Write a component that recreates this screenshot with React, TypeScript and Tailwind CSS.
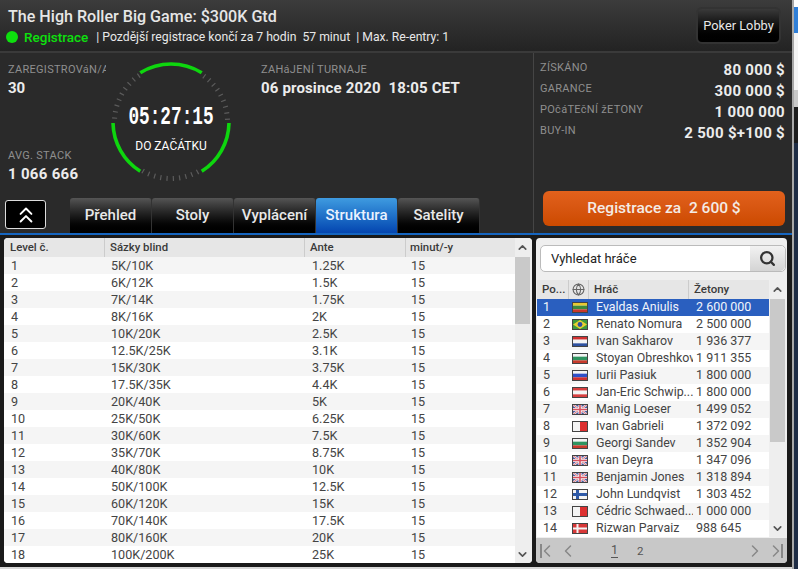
import { ChevronsUp, ChevronUp, ChevronDown, ChevronLeft, ChevronRight, Search, Globe } from "lucide-react";

const levels = [
  ["1", "5K/10K", "1.25K"],
  ["2", "6K/12K", "1.5K"],
  ["3", "7K/14K", "1.75K"],
  ["4", "8K/16K", "2K"],
  ["5", "10K/20K", "2.5K"],
  ["6", "12.5K/25K", "3.1K"],
  ["7", "15K/30K", "3.75K"],
  ["8", "17.5K/35K", "4.4K"],
  ["9", "20K/40K", "5K"],
  ["10", "25K/50K", "6.25K"],
  ["11", "30K/60K", "7.5K"],
  ["12", "35K/70K", "8.75K"],
  ["13", "40K/80K", "10K"],
  ["14", "50K/100K", "12.5K"],
  ["15", "60K/120K", "15K"],
  ["16", "70K/140K", "17.5K"],
  ["17", "80K/160K", "20K"],
  ["18", "100K/200K", "25K"],
];

const players = [
  ["Evaldas Aniulis", "2 600 000", "lt"],
  ["Renato Nomura", "2 500 000", "br"],
  ["Ivan Sakharov", "1 936 377", "nl"],
  ["Stoyan Obreshkov", "1 911 355", "bg"],
  ["Iurii Pasiuk", "1 800 000", "ru"],
  ["Jan-Eric Schwip...", "1 800 000", "at"],
  ["Manig Loeser", "1 499 052", "gb"],
  ["Ivan Gabrieli", "1 372 092", "mt"],
  ["Georgi Sandev", "1 352 904", "bg"],
  ["Ivan Deyra", "1 347 096", "gb"],
  ["Benjamin Jones", "1 318 894", "gb"],
  ["John Lundqvist", "1 303 452", "fi"],
  ["Cédric Schwaed...", "1 000 000", "mt"],
  ["Rizwan Parvaiz", "988 645", "dk"],
];

const tabs = ["Přehled", "Stoly", "Vyplácení", "Struktura", "Satelity"];

const stats = [
  ["ZÍSKÁNO", "80 000 $"],
  ["GARANCE", "300 000 $"],
  ["POčáTEčNÍ žETONY", "1 000 000"],
  ["BUY-IN", "2 500 $+100 $"],
];

function Flag({ code }: { code: string }) {
  const stripes: Record<string, string[]> = {
    lt: ["#e8c832", "#3c8a3c", "#c8372d"],
    nl: ["#d03030", "#f4f4f4", "#2f52a0"],
    bg: ["#f4f4f4", "#2f9460", "#c83a2c"],
    ru: ["#f4f4f4", "#3050c8", "#d03030"],
    at: ["#d84040", "#f4f4f4", "#d84040"],
  };
  return (
    <svg width="16" height="11" viewBox="0 0 16 11" className="block shrink-0">
      <rect width="16" height="11" fill="#f4f4f4" />
      {stripes[code]?.map((c, i) => <rect key={i} y={i * 3.67} width="16" height="3.67" fill={c} />)}
      {code === "br" && (
        <>
          <rect width="16" height="11" fill="#3d9a3d" />
          <polygon points="8,1 15,5.5 8,10 1,5.5" fill="#e8d030" />
          <circle cx="8" cy="5.5" r="2.4" fill="#2f4f9f" />
        </>
      )}
      {code === "gb" && (
        <>
          <rect width="16" height="11" fill="#4a5aa0" />
          <path d="M0 0L16 11M16 0L0 11" stroke="#f4f4f4" strokeWidth="2.2" />
          <path d="M0 0L16 11M16 0L0 11" stroke="#d85060" strokeWidth="0.8" />
          <path d="M8 0V11M0 5.5H16" stroke="#f4f4f4" strokeWidth="3.2" />
          <path d="M8 0V11M0 5.5H16" stroke="#d85060" strokeWidth="1.6" />
        </>
      )}
      {code === "mt" && <rect x="8" width="8" height="11" fill="#dc2f2f" />}
      {code === "fi" && <path d="M5.5 0V11M0 5.5H16" stroke="#2f5aa8" strokeWidth="3" />}
      {code === "dk" && (
        <>
          <rect width="16" height="11" fill="#d83838" />
          <path d="M5.5 0V11M0 5.5H16" stroke="#f4f4f4" strokeWidth="2" />
        </>
      )}
      <rect x="0.5" y="0.5" width="15" height="10" fill="none" stroke="#444" />
    </svg>
  );
}

function polar(deg: number, r: number) {
  const a = ((deg - 90) * Math.PI) / 180;
  return [60 + r * Math.cos(a), 60 + r * Math.sin(a)];
}

function arc(from: number, to: number) {
  const [x1, y1] = polar(from, 58);
  const [x2, y2] = polar(to, 58);
  return `M${x1} ${y1}A58 58 0 0 1 ${x2} ${y2}`;
}

function Countdown() {
  const ticks: number[] = [];
  for (let d = 36; d < 88; d += 6.4) ticks.push(d);
  for (let d = 152; d < 212; d += 6.4) ticks.push(d);
  for (let d = 274; d < 328; d += 6.4) ticks.push(d);
  return (
    <div className="relative h-[120px] w-[120px] shrink-0">
      <svg width="120" height="120" viewBox="0 0 120 120" className="block">
        {ticks.map((d) => {
          const [x1, y1] = polar(d, 54);
          const [x2, y2] = polar(d, 59);
          return <line key={d} x1={x1} y1={y1} x2={x2} y2={y2} stroke="#5c5c5c" strokeWidth="1.2" />;
        })}
        <g fill="none" stroke="#0ed60e" strokeWidth="3.6">
          <path d={arc(-32, 32)} />
          <path d={arc(91, 148)} />
          <path d={arc(212, 269)} />
        </g>
      </svg>
      <div className="absolute left-0 top-[43px] flex w-full justify-center">
        <span className="origin-center scale-x-[0.71] font-['Liberation_Mono',monospace] text-[25px] font-bold leading-[26px] text-white">
          05:27:15
        </span>
      </div>
      <div className="absolute left-0 top-[77px] w-full text-center text-[12px] leading-[14px] text-white">DO ZAČÁTKU</div>
    </div>
  );
}

export default function App() {
  return (
    <div className="flex h-[569px] w-[798px] overflow-hidden bg-[#d8d8d8] font-['Roboto',sans-serif]">
      <div className="flex h-[567px] w-[792px] shrink-0 flex-col bg-[#1a1a1a]">
        <header className="flex h-[53px] shrink-0 items-start justify-between border-b-2 border-[#3a3a3a] bg-gradient-to-b from-[#3c3c3c] to-[#232323] pl-2 pr-[11px] pt-2">
          <div>
            <h1 className="text-[16.1px] font-medium leading-[18px] text-[#e6e6e6]">The High Roller Big Game: $300K Gtd</h1>
            <div className="mt-[3px] flex h-4 items-center text-[12.2px] text-[#e8e8e8]">
              <span className="-ml-[2px] mr-[6px] h-3 w-3 rounded-full bg-[#0ee00e]" />
              <span className="mr-[8px] text-[13.5px] font-medium text-[#0ee00e]">Registrace</span>
              <span className="whitespace-pre">| Pozdější registrace končí za 7 hodin  57 minut  | Max. Re-entry: 1</span>
            </div>
          </div>
          <button className="-mt-[1px] h-[37px] w-[85px] rounded-md border-2 border-[#333] bg-gradient-to-b from-[#3a3a3a] to-black text-[12.8px] text-[#e8e8e8]">
            Poker Lobby
          </button>
        </header>

        <section className="flex h-[182px] shrink-0 border-b-2 border-[#1565c0] bg-[#2a2a2a]">
          <div className="flex w-[534px] shrink-0 flex-col border-r border-[#454545]">
            <div className="flex h-[146px] pl-2">
              <div className="flex w-[98px] shrink-0 flex-col justify-between pb-[12px] pt-[10px]">
                <div className="overflow-hidden whitespace-nowrap">
                  <div className="text-[11px] leading-[14px] tracking-[0.3px] text-[#8f8f8f]">ZAREGISTROVáN/A</div>
                  <div className="mt-[2px] text-[15px] font-bold leading-[18px] text-[#ececec]">30</div>
                </div>
                <div className="mb-[3px] whitespace-nowrap">
                  <div className="text-[11px] leading-[14px] tracking-[0.3px] text-[#8f8f8f]">AVG. STACK</div>
                  <div className="mt-[2px] text-[15px] font-bold leading-[18px] tracking-[0.3px] text-[#ececec]">1 066 666</div>
                </div>
              </div>
              <div className="ml-[5px] mt-[9px]">
                <Countdown />
              </div>
              <div className="ml-[30px] pt-[10px]">
                <div className="text-[11px] leading-[14px] tracking-[0.3px] text-[#8f8f8f]">ZAHáJENÍ TURNAJE</div>
                <div className="mt-[2px] whitespace-pre text-[15px] font-bold leading-[18px] tracking-[0.15px] text-[#ececec]">06 prosince 2020  18:05 CET</div>
              </div>
            </div>
            <div className="mt-auto flex h-[35px] items-end pl-[5px]">
              <button className="mb-[4px] mr-6 flex h-[29px] w-[41px] items-center justify-center rounded-[3px] border border-[#ddd] bg-black text-white">
                <ChevronsUp size={26} strokeWidth={1.8} />
              </button>
              {tabs.map((t) => (
                <div
                  key={t}
                  className={`flex h-[35px] w-[82px] items-center justify-center rounded-t-[3px] border-r border-[#333] text-[15px] font-medium ${
                    t === "Struktura"
                      ? "bg-gradient-to-b from-[#3f9be0] to-[#0645b0] text-[#eaf2ff]"
                      : "bg-gradient-to-b from-[#555] via-[#1c1c1c] to-black text-[#e8e8e8]"
                  }`}
                >
                  {t}
                </div>
              ))}
            </div>
          </div>
          <div className="flex flex-1 flex-col pb-[7px] pl-[6px] pr-[7px] pt-[7px]">
            <dl className="flex flex-col">
              {stats.map(([k, v]) => (
                <div key={k} className="flex h-[21px] items-start justify-between">
                  <dt className="mt-[1px] text-[11px] leading-[14px] tracking-[0.3px] text-[#8f8f8f]">{k}</dt>
                  <dd className="pt-[1px] text-[15px] font-bold leading-[18px] tracking-[0.3px] text-[#ececec]">{v}</dd>
                </div>
              ))}
            </dl>
            <button className="ml-[3px] mt-auto h-[35px] rounded-md bg-gradient-to-b from-[#e2611c] to-[#cc4a00] text-[15.5px] font-medium text-[#f4ece6]">
              <span className="whitespace-pre">Registrace za  2 600 $</span>
            </button>
          </div>
        </section>

        <main className="flex flex-1 gap-1 px-1 pb-[4px] pt-[3px]">
          <div className="flex w-[528px] overflow-hidden rounded-[4px] bg-white text-[12.6px] text-[#444]">
            <div className="flex-1">
              <div className="flex h-[19px] bg-[#e6e6e6] text-[11.4px] font-medium leading-[18px] text-[#3a3a3a]">
                <div className="w-[101px] border-r border-[#ccc] pl-[6px]">Level č.</div>
                <div className="w-[200px] border-r border-[#ccc] pl-[5px]">Sázky blind</div>
                <div className="w-[101px] border-r border-[#ccc] pl-[5px]">Ante</div>
                <div className="flex-1 pl-[4px]">minut/-y</div>
              </div>
              {levels.map((r, i) => (
                <div key={r[0]} className={`flex h-[17px] items-center leading-[17px] ${i % 2 === 0 ? "bg-[#f5f5f5]" : "bg-white"}`}>
                  <div className="w-[101px] pl-[7px]">{r[0]}</div>
                  <div className="w-[200px] pl-[6px]">{r[1]}</div>
                  <div className="w-[101px] pl-[7px]">{r[2]}</div>
                  <div className="flex-1 pl-[5px]">15</div>
                </div>
              ))}
            </div>
            <div className="flex w-[17px] flex-col bg-[#eeeeee] pr-[2px]">
              <div className="flex h-[19px] items-center justify-center bg-[#eee] text-[#555]">
                <ChevronUp size={13} strokeWidth={3} />
              </div>
              <div className="h-[67px] bg-[#c9c9c9]" />
              <div className="mt-auto flex h-[17px] items-center justify-center text-[#555]">
                <ChevronDown size={13} strokeWidth={3} />
              </div>
            </div>
          </div>

          <div className="flex w-[251px] flex-col overflow-hidden rounded-[4px] bg-[#efefef] pt-[7px] text-[12.5px] text-[#444]">
            <div className="mx-1 mr-[1px] flex h-[27px] rounded-[5px] border border-[#bbb] bg-white">
              <div className="flex-1 pl-[10px] text-[13px] leading-[25px] text-[#222]">Vyhledat hráče</div>
              <div className="flex w-[35px] items-center justify-center rounded-r-[5px] bg-gradient-to-b from-[#f2f2f2] to-[#d4d4d4] text-[#333]">
                <Search size={17} strokeWidth={3.2} />
              </div>
            </div>
            <div className="ml-[1px] mt-2 flex">
              <div className="w-[232px]">
                <div className="flex h-[19px] items-center bg-[#e6e6e6] text-[11.5px] font-medium text-[#3a3a3a]">
                  <div className="w-[32px] border-r border-[#ccc] pl-[5px] leading-[19px]">Po...</div>
                  <div className="flex h-[19px] w-[20px] items-center justify-center border-r border-[#ccc] text-[#666]">
                    <Globe size={13} />
                  </div>
                  <div className="w-[100px] border-r border-[#ccc] pl-[5px] leading-[19px]">Hráč</div>
                  <div className="flex-1 pl-[5px] leading-[19px]">Žetony</div>
                </div>
                {players.map(([name, chips, flag], i) => (
                  <div
                    key={name + i}
                    className={`flex h-[17px] items-start leading-[15px] ${
                      i === 0 ? "bg-[#2a5fbf] text-[#f2f5fb]" : i % 2 === 1 ? "bg-white" : "bg-[#f5f5f5]"
                    }`}
                  >
                    <div className="w-[35px] pl-[6px]">{i + 1}</div>
                    <div className="w-[24px] pt-[3px]">
                      <Flag code={flag} />
                    </div>
                    <div className="mr-[3px] w-[97px] overflow-hidden whitespace-nowrap text-[12.4px]">{name}</div>
                    <div className="flex-1">{chips}</div>
                  </div>
                ))}
              </div>
              <div className="ml-[1px] flex w-[15px] flex-col bg-[#eee]">
                <div className="flex h-[19px] items-center justify-center text-[#555]">
                  <ChevronUp size={13} strokeWidth={3} />
                </div>
                <div className="h-[143px] bg-[#c9c9c9]" />
                <div className="mt-auto flex h-[17px] items-center justify-center text-[#555]">
                  <ChevronDown size={13} strokeWidth={3} />
                </div>
              </div>
            </div>
            <div className="mt-[1px] flex flex-1 items-center bg-[#c8c8c8] pl-[4px] pr-[4px] text-[#888]">
              <span className="h-[14px] w-[2px] bg-[#888]" />
              <ChevronLeft size={20} strokeWidth={1.8} className="-ml-[5px]" />
              <ChevronLeft size={20} strokeWidth={1.8} className="ml-[1px]" />
              <span className="ml-[33px] border-b border-[#555] text-[12.5px] leading-[14px] text-[#555]">1</span>
              <span className="ml-[19px] text-[11.5px] leading-[14px] text-[#555]">2</span>
              <ChevronRight size={20} strokeWidth={1.8} className="ml-auto" />
              <ChevronRight size={20} strokeWidth={1.8} className="ml-[1px]" />
              <span className="-ml-[5px] h-[14px] w-[2px] bg-[#888]" />
            </div>
          </div>
        </main>
      </div>

      <div className="w-[2px] shrink-0 bg-[#a8a8a8]" />
      <div className="flex w-1 shrink-0 flex-col">
        <div className="h-[7px] bg-white" />
        <div className="h-[26px] bg-[#2f7fd8]" />
        <div className="h-[57px] bg-[#f4f4f4]" />
        <div className="h-[17px] bg-[#c8c8c8]" />
        <div className="h-[36px] bg-[#1c1c1c]" />
        <div className="flex-1 bg-[#1f2d45]" />
      </div>
    </div>
  );
}
